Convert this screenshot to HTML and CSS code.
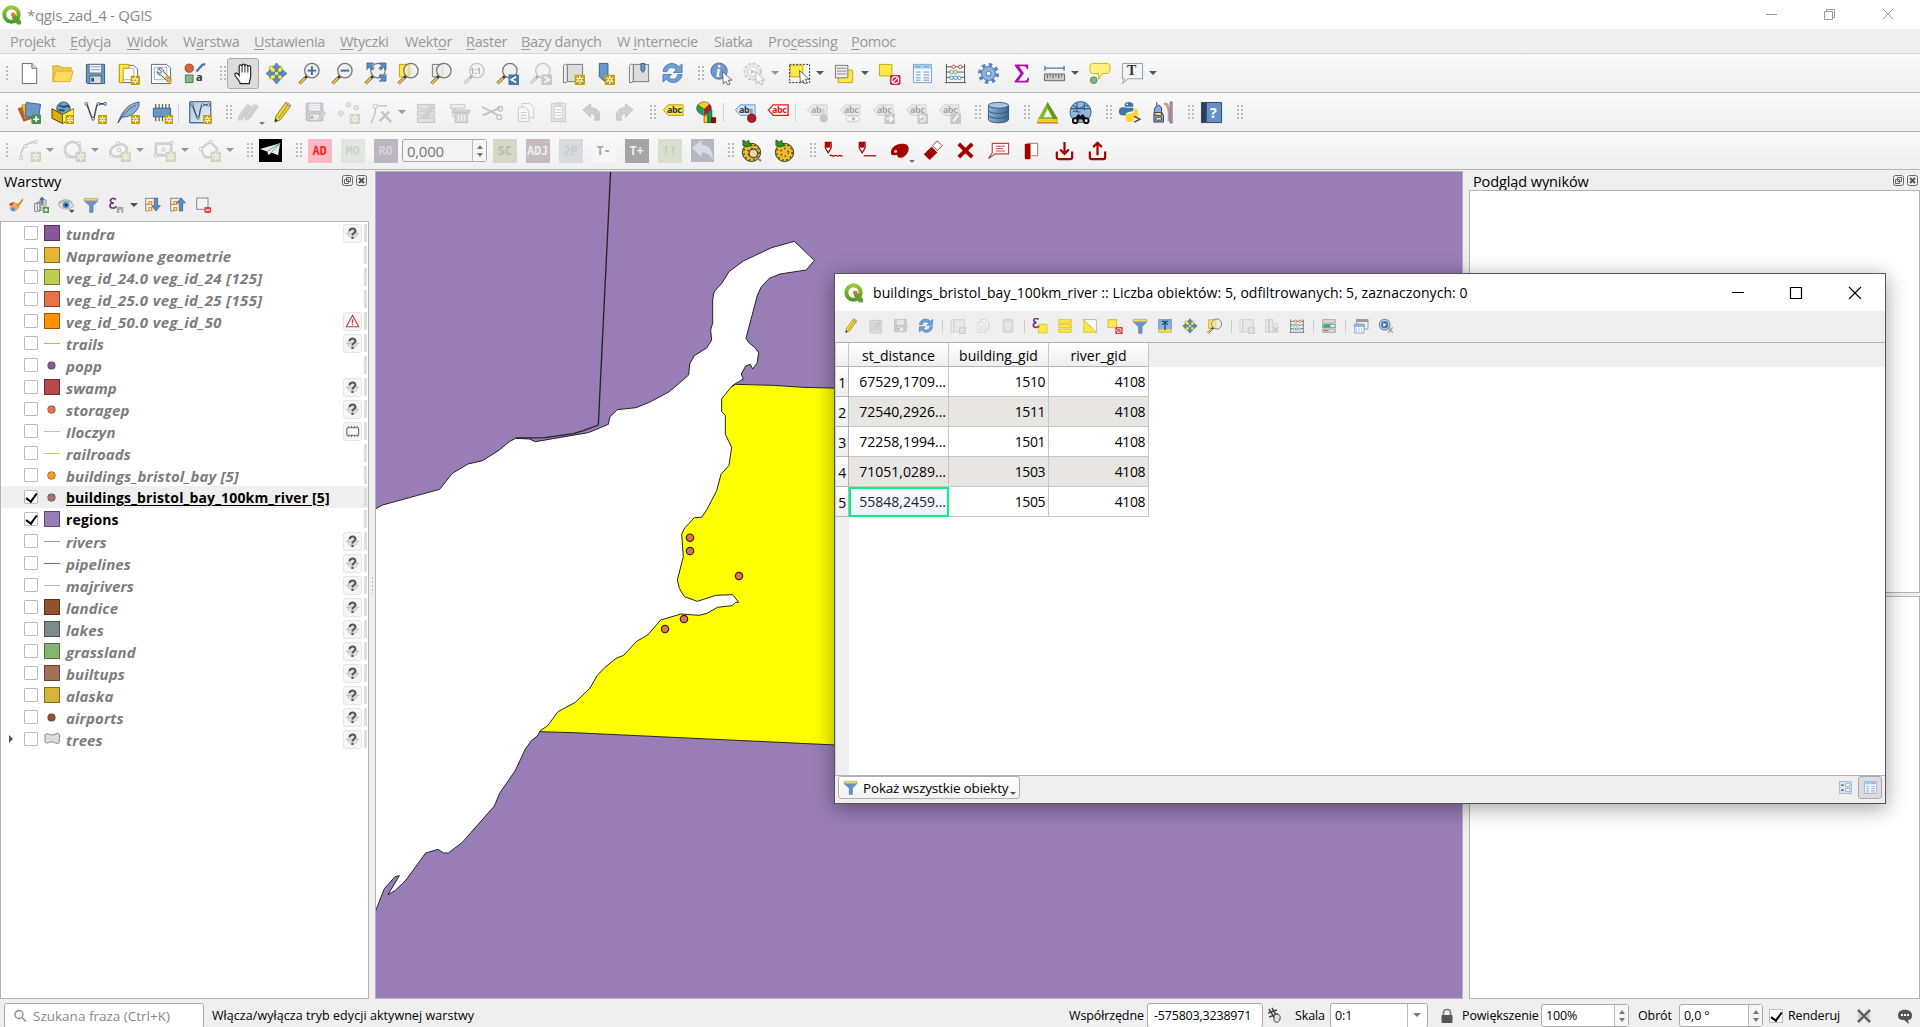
FILE: index.html
```html
<!DOCTYPE html>
<html lang="pl">
<head>
<meta charset="utf-8">
<title>*qgis_zad_4 - QGIS</title>
<link rel="stylesheet" href="styles.css">
</head>
<body>
<svg class="defs" width="0" height="0">
<defs>
<linearGradient id="gq" x1="0" y1="0" x2="0" y2="1"><stop offset="0" stop-color="#9cc53b"/><stop offset="1" stop-color="#4f9a2c"/></linearGradient>
<linearGradient id="gb" x1="0" y1="0" x2="1" y2="1"><stop offset="0" stop-color="#a9c3e0"/><stop offset="1" stop-color="#f0f4fa"/></linearGradient>
<linearGradient id="gd" x1="0" y1="0" x2="1" y2="0"><stop offset="0" stop-color="#8fb3d9"/><stop offset="1" stop-color="#3e6690"/></linearGradient>
</defs>
<symbol id="star" viewBox="0 0 10 10"><rect width="10" height="10" rx="1" fill="#c4a000"/><path d="M5 1.2v7.6M1.700 3.100l6.600 3.800M8.300 3.100L1.700 6.900" stroke="#fff" stroke-width="1.300"/><circle cx="5" cy="5" r="1" fill="#c4a000"/></symbol>
<symbol id="qgis" viewBox="0 0 20 20"><circle cx="9.500" cy="9.500" r="7.200" fill="none" stroke="url(#gq)" stroke-width="4"/><path d="M10 9.500l3-.3 6 6.800v3.500h-3.800L10 13z" fill="#5ba02e"/><path d="M9.500 7.500l4 .6-1 4-3.500-1z" fill="#ee7913"/></symbol>
<symbol id="new" viewBox="0 0 24 24"><path d="M4.500 1.500h10l5 5v16h-15z" fill="#fff" stroke="#666"/><path d="M14.500 1.500v5h5" fill="#ddd" stroke="#666"/></symbol>
<symbol id="open" viewBox="0 0 24 24"><path d="M2 20V4h7l2 2h10v4" fill="#f2c94c" stroke="#d6a520"/><path d="M2 20.500L5 9.500h18l-3 11z" fill="#ffdc5e" stroke="#dcae2c"/></symbol>
<symbol id="save" viewBox="0 0 24 24"><path d="M2.500 2.500h19v20h-18l-1-1z" fill="#6d97c4" stroke="#3d5a7c"/><path d="M5.500 2.500h13v9h-13z" fill="#f4f4f4" stroke="#56779b"/><path d="M7 5h10M7 8h10" stroke="#999"/><path d="M6 14.500h12v8H6z" fill="#ddd" stroke="#3d5a7c"/><path d="M7.500 16.500h3v4h-3z" fill="#3d5a7c"/></symbol>
<symbol id="layout" viewBox="0 0 24 24"><path d="M2.500 3.500h15l4 4v14h-19z" fill="#fff" stroke="#666"/><path d="M5.500 6.500h12v12h-12z" fill="#fff" stroke="#9ab0dd"/><path d="M2.500 2.500h10v4h-6v15h-4z" fill="#fce94f" stroke="#c4a000"/><use href="#star" x="14" y="14" width="10" height="10"/></symbol>
<symbol id="wrench" viewBox="0 0 24 24"><path d="M1.500 2.500h16l4 4v16h-20z" fill="#fff" stroke="#666"/><path d="M4.500 5.500h13v13h-13z" fill="#f5f8ff" stroke="#9ab0dd"/><path d="M8 7c3-1.500 6 0 6.500 3.500L22 18l-3 3-7.500-7.500C9 14 7.500 12.500 7.500 10l3 2 2-2z" fill="#eee" stroke="#555"/><path d="M16.500 15l5.500 6" stroke="#d9b33a" stroke-width="3.500"/></symbol>
<symbol id="style" viewBox="0 0 24 24"><circle cx="6.500" cy="6.500" r="4.300" fill="#d6613c" stroke="#a5452a"/><path d="M14 10l7-8M21 2l2 1" stroke="#4878ae" stroke-width="2.500"/><path d="M2.500 13.500h8v8h-8z" fill="#8cb68a" stroke="#4e7d4c"/></symbol>
<symbol id="hand" viewBox="0 0 24 24"><path d="M8.500 22.500c0-3-5.500-7-5.500-9.500s3-1.500 4.500 1V4.500c0-2 3-2 3 0 0-3 3-3 3 .2 0-2.500 3-2.500 3 .5 0-2 3-2 3 .5v9c0 3-1.500 5-1.500 7.800z" fill="#fff" stroke="#222" stroke-width="1.200"/><path d="M10.500 4v7M13.500 4.500V11M16.500 5v6" stroke="#222"/></symbol>
<symbol id="arrows" viewBox="0 0 24 24"><path d="M12 1l4 5h-2.500v4h-3V6H8zM12 23l-4-5h2.500v-4h3v4H16zM1 12l5-4v2.500h4v3H6V16zM23 12l-5 4v-2.500h-4v-3h4V8z" fill="#5e8cc2" stroke="#3d6a9c" stroke-width=".7"/></symbol>
<symbol id="pansel" viewBox="0 0 24 24"><path d="M4.500 4.500h13v13h-13z" fill="#ffee58" stroke="#d0b400"/><use href="#arrows"/></symbol>
<symbol id="glass" viewBox="0 0 24 24"><path d="M1.500 22.500l8-8" stroke="#333" stroke-width="3"/><path d="M1.500 22.500l6-6" stroke="#fcc83a" stroke-width="2"/><circle cx="14.500" cy="9" r="7.500" fill="#eee" fill-opacity=".8" stroke="#777" stroke-width="1.300"/></symbol>
<symbol id="zin" viewBox="0 0 24 24"><use href="#glass"/><path d="M14.500 4.500v9M10 9h9" stroke="#3e6da3" stroke-width="2"/></symbol>
<symbol id="zout" viewBox="0 0 24 24"><use href="#glass"/><path d="M10 9h9" stroke="#3e6da3" stroke-width="2"/></symbol>
<symbol id="zfull" viewBox="0 0 24 24"><use href="#glass"/><path d="M3 1h7L7.500 3.500l3 3-2 2-3-3L3 8zM23 1h-7l2.500 2.500-3 3 2 2 3-3L23 8zM23 20h-7l2.500-2.500-3-3 2-2 3 3L23 13z" fill="#5e8cc2" stroke="#335a86" stroke-width=".7"/></symbol>
<symbol id="zsel" viewBox="0 0 24 24"><path d="M2.500 2.500h11v13h-11z" fill="#fce94f" stroke="#c4a000"/><use href="#glass"/><path d="M14 3h-3v12h3z" fill="#eddd82"/></symbol>
<symbol id="zlay" viewBox="0 0 24 24"><path d="M2.500 2.500h11v13h-11z" fill="#e8e8e8" stroke="#777"/><use href="#glass"/></symbol>
<symbol id="zprev" viewBox="0 0 24 24"><use href="#glass"/><path d="M13 13h11v11H13z" fill="#4878ae"/><path d="M21 15.500l-5 3 5 3" fill="none" stroke="#fff" stroke-width="1.800"/></symbol>
<symbol id="znext" viewBox="0 0 24 24"><use href="#glass"/><path d="M13 13h11v11H13z" fill="#888"/><path d="M16 15.500l5 3-5 3" fill="none" stroke="#fff" stroke-width="1.800"/></symbol>
<symbol id="map" viewBox="0 0 24 24"><path d="M5.500 2.500h16v18h-16z" fill="#ddd" stroke="#777"/><path d="M1.500 4.500c0-3 4-3 4 0v15l-1 2h-3z" fill="#eee" stroke="#777"/></symbol>
<symbol id="newmap" viewBox="0 0 24 24"><use href="#map"/><use href="#star" x="13" y="13" width="11" height="11"/></symbol>
<symbol id="newbm" viewBox="0 0 24 24"><path d="M4.500 1.500h9v16l-3 3-6-5z" fill="#6b97c8" stroke="#3d5f87"/><use href="#star" x="10" y="13" width="11" height="11"/></symbol>
<symbol id="bm" viewBox="0 0 24 24"><use href="#map"/><path d="M13.500 1.500h4v7l-2 2.500-2-2.500z" fill="#6b97c8" stroke="#3d5f87"/></symbol>
<symbol id="refresh" viewBox="0 0 24 24"><path d="M2 10C3 1 14-1 18.500 5L22 2v9h-9l3-3C12 4 7 6 6.500 10zM22 13c-1 9-12 11-16.500 5L2 21v-8h9l-3 3c4 4 9 1.500 9.500-3z" fill="#6ea0d8" stroke="#3f74ad" stroke-width=".8"/></symbol>
<symbol id="cur" viewBox="0 0 24 24"><path d="M13 10l10 9h-4l2 4-2.500 1-2-4-2.500 3z" fill="#fff" stroke="#555" stroke-width=".9"/></symbol>
<symbol id="info" viewBox="0 0 24 24"><circle cx="9.500" cy="9.500" r="8.500" fill="#6e99cc" stroke="#4a75a8"/><use href="#cur"/></symbol>
<symbol id="cog" viewBox="0 0 24 24"><circle cx="12" cy="12" r="9" fill="none" stroke="#5a86bd" stroke-width="4" stroke-dasharray="3.500 3.570"/><circle cx="12" cy="12" r="7.300" fill="#8db3de" stroke="#4a75a8"/><circle cx="12" cy="12" r="2.500" fill="#f5f8fc" stroke="#4a75a8"/></symbol>
<symbol id="action" viewBox="0 0 24 24"><circle cx="10" cy="10" r="8.500" fill="#ddd" stroke="#888" stroke-width="2" stroke-dasharray="3 2"/><circle cx="10" cy="10" r="5" fill="#fff" stroke="#888"/><path d="M8 7l5 3-5 3z" fill="#888"/><use href="#cur"/></symbol>
<symbol id="select" viewBox="0 0 24 24"><path d="M1.500 2.500h21v19h-21z" fill="none" stroke="#222" stroke-dasharray="2 1.500"/><path d="M2.500 3.500h13v12h-13z" fill="#fde94a" stroke="#c9a800"/><use href="#cur" x="-1" y="-1"/></symbol>
<symbol id="form" viewBox="0 0 24 24"><path d="M5.500 8.500h15v13h-15z" fill="#fde94a" stroke="#c9a800"/><path d="M2.500 3.500h13v13h-13z" fill="#eee" stroke="#777"/><path d="M4 6.500h10M4 9.500h10M4 12.500h10" stroke="#888"/></symbol>
<symbol id="desel" viewBox="0 0 24 24"><path d="M1.500 2.500h13v12h-13z" fill="#fde94a" stroke="#c9a800"/><rect x="12.500" y="13.500" width="11" height="10.500" rx="1.500" fill="#dd2a3a"/><circle cx="18" cy="18.700" r="3.500" fill="none" stroke="#fff" stroke-width="1.200"/><path d="M15.500 21l5-4.500" stroke="#fff" stroke-width="1.200"/></symbol>
<symbol id="table" viewBox="0 0 24 24"><path d="M2.500 2.500h19v19h-19z" fill="#f3f8ff" stroke="#7a9cc5"/><path d="M3 3h18v4H3z" fill="#a9d2ee"/><path d="M5 5h5M13 5h6M5 10.500h5M5 13.500h5M5 16.500h5M5 19h5M13 10.500h6M13 13.500h6M13 16.500h6M13 19h6" stroke="#6e93c4"/></symbol>
<symbol id="abacus" viewBox="0 0 24 24"><path d="M2.500 2v20M21.500 2v20M2 5h20M2 10.500h20M2 16h20M1 21.500h22" stroke="#555"/><g stroke-width="1" fill="#fff"><g stroke="#d04040"><circle cx="10" cy="5" r="1.800"/><circle cx="17" cy="5" r="1.800"/></g><g stroke="#58ab58"><circle cx="8" cy="10.500" r="1.800"/><circle cx="12" cy="10.500" r="1.800"/></g><g stroke="#4888c0"><circle cx="8" cy="16.500" r="1.800"/><circle cx="12" cy="16.500" r="1.800"/><circle cx="16" cy="16.500" r="1.800"/></g></g></symbol>
<symbol id="sigma" viewBox="0 0 24 24"><path d="M5 2.500h14v5h-1.500c-.5-2-1-3-3-3H9.500l5 7.200-5.500 7.800h6c2 0 3-1 3.500-3H20l-.8 5H4.800v-1.300l6-8.200L5 4z" fill="#a818a8"/></symbol>
<symbol id="ruler" viewBox="0 0 24 24"><path d="M2 6.500h20M2 4v5M22 4v5" stroke="#4b77aa" stroke-width="1.300"/><path d="M1.500 12.500h21v7h-21z" fill="#ccc" stroke="#666"/><path d="M4.500 13v4M7.500 13v2.500M10.500 13v4M13.500 13v2.500M16.500 13v4M19.500 13v2.500" stroke="#555"/></symbol>
<symbol id="tip" viewBox="0 0 24 24"><path d="M5 1.500h15c3 0 3 3 3 5.500s-1 5-3 5h-5l-4 6v-6H5c-3 0-3-2.500-3-5s0-5.500 3-5.500z" fill="#fff283" stroke="#cdb21c"/><circle cx="6" cy="19" r="3.500" fill="#82b385" stroke="#5d8e60"/></symbol>
<symbol id="textn" viewBox="0 0 24 24"><path d="M1.500 1.500h21v16h-15l-6 5 2-5h-2z" fill="#f0f5f8" stroke="#999"/></symbol>
<symbol id="dsm" viewBox="0 0 24 24"><path d="M0 8l6 13 9-3-6-13z" fill="#c85a2c" stroke="#8f3c18" stroke-width=".6"/><path d="M4 4l3 14 11-3-3-12z" fill="#f0c020" stroke="#a88000" stroke-width=".6"/><path d="M8.500 1.500l15 2-2 14.500-14-2z" fill="#6d97c9" stroke="#3d6594"/><rect x="14" y="14" width="10" height="10" rx="1" fill="#4e8b57"/><path d="M19 16v6M16 19h6" stroke="#fff" stroke-width="1.700"/></symbol>
<symbol id="gpkg" viewBox="0 0 24 24"><circle cx="13" cy="8" r="7" fill="#7b9ec8" stroke="#2e5580"/><path d="M8 5c3-1 3 2 6 1s4-2 5 1M8 10c3-2 4 2 6-1" stroke="#284b72" stroke-width="2" fill="none"/><path d="M1 8l11 6v9.500L1 18z" fill="#d9b100" stroke="#504000"/><path d="M12 14l12-6v9l-12 6.500z" fill="#fff04a" stroke="#6e6000"/><use href="#star" x="15" y="14.500" width="9.500" height="9.500"/></symbol>
<symbol id="vnode" viewBox="0 0 24 24"><path d="M2.500 3c2 2 4 13 7 16C12 17 12 3 15 3h6" fill="none" stroke="#3d5166" stroke-width="1.600"/><g fill="#fff" stroke="#3d5166"><circle cx="2.500" cy="3" r="1.500"/><circle cx="9.500" cy="18.500" r="1.500"/><circle cx="15" cy="3" r="1.500"/><circle cx="22" cy="3" r="1.500"/></g></symbol>
<symbol id="shp" viewBox="0 0 24 24"><use href="#vnode"/><use href="#star" x="14.500" y="14.500" width="9.500" height="9.500"/></symbol>
<symbol id="feather" viewBox="0 0 24 24"><path d="M1 23C5 11 11 3 23 1c1 6-4 12-11 15l-7 1z" fill="#8fb0d5" stroke="#3f6288"/><path d="M1 23C5 15 12 8 20 4" stroke="#3f6288" fill="none"/><use href="#star" x="14.500" y="14.500" width="9.500" height="9.500"/></symbol>
<symbol id="chip" viewBox="0 0 24 24"><path d="M6 3v18M9.500 3v18M13 3v18M16.500 3v18M20 3v18" stroke="#555" stroke-width="1.200"/><path d="M3.500 7.500h18v9h-18z" fill="#6995c8" stroke="#39608d"/><use href="#star" x="15" y="14.500" width="9.500" height="9.500"/></symbol>
<symbol id="virt" viewBox="0 0 24 24"><rect x=".7" y=".7" width="22" height="22" rx="1" fill="url(#gb)" stroke="#4a75a8" stroke-width="1.400"/><use href="#vnode" x="1" y="1" width="21" height="22"/><use href="#star" x="14.500" y="14.500" width="9.500" height="9.500"/></symbol>
<symbol id="pencil" viewBox="0 0 24 24"><path d="M4 22l1-6L15 2l5 3.500-10 14z" fill="#f0d83c" stroke="#8a7a20"/><path d="M15 2l1-1 5 3.500-1 1z" fill="#ddd" stroke="#777" stroke-width=".7"/><path d="M17.500 4L8 18" stroke="#bfa52a" stroke-width="1.500"/><path d="M4 22l.6-3.500L7 20z" fill="#222"/></symbol>
<symbol id="pencilg" viewBox="0 0 24 24"><path d="M4 22l1-6L15 2l5 3.500-10 14z" fill="#b9a49c" stroke="#776"/><path d="M15 2l1-1 5 3.500-1 1z" fill="#ddd" stroke="#777" stroke-width=".7"/><path d="M17.500 4L8 18" stroke="#8a7a76" stroke-width="1.500"/></symbol>
<symbol id="pencils" viewBox="0 0 24 24"><use href="#pencilg" x="-3" y="1" width="20" height="22"/><use href="#pencilg" x="4" y="1" width="20" height="22"/></symbol>
<symbol id="saveed" viewBox="0 0 24 24"><use href="#save" width="22" height="22"/><use href="#pencilg" x="12" y="9" width="13" height="14"/></symbol>
<symbol id="pts" viewBox="0 0 24 24"><g fill="#ccc" stroke="#888"><circle cx="4" cy="13" r="2.500"/><circle cx="12" cy="4" r="2.500"/><circle cx="20" cy="7" r="2.500"/></g><use href="#star" x="13" y="13" width="11" height="11"/></symbol>
<symbol id="vtool" viewBox="0 0 24 24"><path d="M1 23c3-5 5-10 5-18h12" fill="none" stroke="#777" stroke-width="1.500"/><path d="M3.500 3.500h4v4h-4z" fill="#fff" stroke="#777"/><path d="M10 21l10-10M12 11l10 11" stroke="#777" stroke-width="2.500"/></symbol>
<symbol id="multi" viewBox="0 0 24 24"><path d="M2.500 3.500h18v5h-18zM2.500 10.500h18v5h-18zM2.500 17.500h18v5h-18z" fill="#c9c49a" stroke="#776f50"/><use href="#pencilg" x="6" y="1" width="17" height="20"/></symbol>
<symbol id="trash" viewBox="0 0 24 24"><path d="M2.500 3.500h15v4h-15zM4.500 7.500v9h3v-9" fill="#e8dada" stroke="#977"/><path d="M5.500 9.500h17v3h-17zM7.500 12.500h13v10h-13z" fill="#c99" stroke="#966"/><path d="M11 14v7M14 14v7M17 14v7" stroke="#fff"/></symbol>
<symbol id="cut" viewBox="0 0 24 24"><path d="M1 6l17 9M2 15l18-8" stroke="#777" stroke-width="2"/><circle cx="20" cy="8" r="2.500" fill="none" stroke="#777" stroke-width="1.500"/><circle cx="19" cy="17" r="2.500" fill="none" stroke="#777" stroke-width="1.500"/></symbol>
<symbol id="copy" viewBox="0 0 24 24"><path d="M8.500 2.500h8l4 4v11h-12z" fill="#f8f8f8" stroke="#888"/><path d="M4.500 6.500h7l4 4v11h-11z" fill="#fff" stroke="#888"/><path d="M7 12h6M7 15h6M7 18h6" stroke="#888"/></symbol>
<symbol id="paste" viewBox="0 0 24 24"><path d="M4.500 2.500h15v19h-15z" fill="#ccc" stroke="#888"/><path d="M7.500 5.500h9v13h-9z" fill="#fff" stroke="#888"/><path d="M9 1h6v4H9z" fill="#aaa"/><path d="M9 9h6M9 12h6M9 15h6" stroke="#888"/></symbol>
<symbol id="undo" viewBox="0 0 24 24"><path d="M3 9l8-6v4c8 0 11 5 9 13h-5c2-4 0-7-4-7v4z" fill="#a88a70" stroke="#8b6f5a"/></symbol>
<symbol id="redo" viewBox="0 0 24 24"><path d="M21 9l-8-6v4C5 7 2 12 4 20h5c-2-4 0-7 4-7v4z" fill="#8f9a8f" stroke="#6d7a6d"/></symbol>
<symbol id="lab" viewBox="0 0 24 24"><path d="M1.500 9.500l5-5.500h15.500v11H6.500z" fill="#fbe850" stroke="#b89b00"/></symbol>
<symbol id="labr" viewBox="0 0 24 24"><path d="M1.500 9.500l5-5.500h15.500v11H6.500z" fill="#fff" stroke="#e11" stroke-width="1.400"/></symbol>
<symbol id="labg" viewBox="0 0 24 24"><path d="M1.500 9.500l5-5.500h15.500v11H6.500z" fill="#ddd9b8" stroke="#999"/></symbol>
<symbol id="labpin" viewBox="0 0 24 24"><path d="M1.500 9.500l5-5.500h15.500v11H6.500z" fill="#cfe4fb" stroke="#5a96dc"/><path d="M18 8v8" stroke="#999" stroke-width="3"/><circle cx="18.500" cy="18" r="4.300" fill="#b01a22" stroke="#7c1016"/></symbol>
<symbol id="labpg" viewBox="0 0 24 24"><use href="#labg"/><path d="M18 8v8" stroke="#999" stroke-width="3"/><circle cx="18.500" cy="18" r="4.300" fill="#a77"/></symbol>
<symbol id="labeye" viewBox="0 0 24 24"><use href="#labg"/><path d="M7 19c4-5 11-5 15 0-4 4-11 4-15 0z" fill="#fff" stroke="#777"/><circle cx="15" cy="18.500" r="2" fill="#777"/></symbol>
<symbol id="labmv" viewBox="0 0 24 24"><use href="#labg"/><path d="M13 13h11v11H13z" fill="#888"/><path d="M15 18.500h6M18.500 15.500l3 3-3 3" stroke="#fff" stroke-width="1.800" fill="none"/></symbol>
<symbol id="labrot" viewBox="0 0 24 24"><use href="#labg"/><path d="M13 13h11v11H13z" fill="#888"/><path d="M16 21c5 2 7-5 2-5.500l-2 2v-3" stroke="#fff" stroke-width="1.500" fill="none"/></symbol>
<symbol id="labed" viewBox="0 0 24 24"><use href="#labg"/><path d="M13 13h11v11H13z" fill="#888"/><path d="M16 21l5-6" stroke="#fff" stroke-width="2"/></symbol>
<symbol id="diag" viewBox="0 0 24 24"><path d="M9.500 8.500L3 4a8 8 0 0 1 11-1.500z" fill="#f7d21a"/><path d="M9 8L3 4c-3 4-1 8 6 11z" fill="#13a84b"/><path d="M9.500 8.500L15 3c4 4 2 9-5.500 12z" fill="#c3151c"/><path d="M3 4c3-4 9-4 12-1 4 4 2 10-5 12-7-1-10-6-7-11zM3 4l6.500 4.500L15 3M9.500 8.500v6" fill="none" stroke="#333" stroke-width=".6"/><path d="M9.500 15.500h4v7h-4z" fill="#ffd21a" stroke="#a07000"/><path d="M13.500 9.500h4v13h-4z" fill="#10a050" stroke="#064"/><path d="M17.500 17.500h4v5h-4z" fill="#b00" stroke="#600"/></symbol>
<symbol id="db" viewBox="0 0 24 24"><path d="M1.500 5v14c0 5 21 5 21 0V5z" fill="url(#gd)" stroke="#365678"/><ellipse cx="12" cy="4.500" rx="10.500" ry="3" fill="#a9c6e4" stroke="#365678"/><path d="M1.500 10c2 4 19 4 21 0M1.500 15c2 4 19 4 21 0" fill="none" stroke="#365678"/></symbol>
<symbol id="tri" viewBox="0 0 24 24"><path d="M12 1L2 19h21zM12 8l5 9H8z" fill="#86b82a" fill-rule="evenodd"/><path d="M12 1l11 18h-5L11 5z" fill="#5c9c20"/><path d="M1 20h22" stroke="#f6c500" stroke-width="1.500"/><path d="M1 22.500h22" stroke="#f07a1a" stroke-width="2"/></symbol>
<symbol id="osm" viewBox="0 0 24 24"><circle cx="12" cy="11.500" r="11" fill="#93b5da" stroke="#33618f"/><path d="M4 5c4 1 5 4 9 2s5-4 7-1M4 11c4-2 6 2 8 0M8 1c0 5 2 7 0 10M16 1v9M2 8h20" fill="none" stroke="#33618f" stroke-width="1.200"/><path d="M5 20l4-6h2l1 2 1-2h2l4 6-3 2-3-3h-2l-3 3z" fill="#111"/><g fill="#fff" stroke="#111" stroke-width="2"><circle cx="6.500" cy="20.500" r="2.500"/><circle cx="18" cy="20.500" r="2.500"/></g></symbol>
<symbol id="py" viewBox="0 0 24 24"><path d="M8 6h8V4c0-4-9-4-9-.5V6zM11 7h5v3c0 2-8 0-8 5-5 1-7-1-7-4 0-5 3-5 10-4z" fill="#3f74a5"/><path d="M13 22c-5 0-5-2-5-5s1-4 4-4c4 0 5-1 5-5 4-1 4 3 4 6s-1 4-8 4h3c2 3 0 4-3 4z" fill="#ffd43b"/><circle cx="9.500" cy="3.500" r="1" fill="#fff"/><path d="M17 16l6 3-6 3" fill="none" stroke="#444" stroke-width="1.500"/></symbol>
<symbol id="robot" viewBox="0 0 24 24"><path d="M6 1v4M4 7l4-3 3 3v4l2 4v7H3v-8z" fill="#93a5e8" stroke="#345"/><path d="M4 12h7v3H4zM5 17h6v3H5z" fill="#f3e58b" stroke="#444"/><path d="M14 4c3-4 5 6 5 10v7" stroke="#c99" stroke-width="3" fill="none"/><path d="M20 1h2v22h-2z" fill="#bcc4dd" stroke="#667"/></symbol>
<symbol id="help" viewBox="0 0 24 24"><path d="M1.500 1.500h21v21h-21z" fill="#6390c8" stroke="#2d4563"/><path d="M2 2h5v20H2z" fill="#2c3e55"/></symbol>
<symbol id="arc" viewBox="0 0 24 24"><path d="M3 20C3 9 8 4 18 3" fill="none" stroke="#888" stroke-width="1.700"/><path d="M1.500 18.500h3v3h-3zM6 6h3v3H6zM17 1.500h3v3h-3z" fill="#fff" stroke="#888"/><use href="#star" x="13" y="13" width="11" height="11"/></symbol>
<symbol id="circ" viewBox="0 0 24 24"><circle cx="10" cy="11" r="8" fill="none" stroke="#999" stroke-width="3"/><path d="M15 3h3v3h-3zM3 16h3v3H3z" fill="#fff" stroke="#888"/><use href="#star" x="13" y="13" width="11" height="11"/></symbol>
<symbol id="ell" viewBox="0 0 24 24"><ellipse cx="11" cy="12" rx="9" ry="6" transform="rotate(-20 11 12)" fill="none" stroke="#999" stroke-width="3"/><path d="M10 10h3v3h-3zM9 3h3v3H9zM2 16h3v3H2z" fill="#fff" stroke="#888"/><use href="#star" x="13" y="13" width="11" height="11"/></symbol>
<symbol id="rect" viewBox="0 0 24 24"><path d="M3 5h16v12H3z" fill="none" stroke="#999" stroke-width="3"/><path d="M18 2.500h3v3h-3zM9.500 9.500h3v3h-3zM1.500 16h3v3h-3z" fill="#fff" stroke="#888"/><use href="#star" x="13" y="13" width="11" height="11"/></symbol>
<symbol id="poly" viewBox="0 0 24 24"><path d="M3 10l10-7 7 7-3 9H7z" fill="none" stroke="#999" stroke-width="2.500"/><path d="M12 1.500h3v3h-3zM1.500 9h3v3h-3z" fill="#fff" stroke="#888"/><use href="#star" x="13" y="13" width="11" height="11"/></symbol>
<symbol id="plane" viewBox="0 0 24 24"><path d="M0 0h24v24H0z" fill="#000"/><path d="M1 10.500L22 4.500 20 17l-7-3-3 3-1.500-4z" fill="#e3eef0"/><path d="M8.500 13L22 4.500 13 14" fill="none" stroke="#7d9a9e"/></symbol>
<symbol id="back" viewBox="0 0 24 24"><path d="M0 0h24v24H0z" fill="#b5b7c3"/><path d="M1 9l10-8v5c8 0 12 6 12 16-3-6-6-8-12-8v5z" fill="#d6dbe4"/></symbol>
<symbol id="pine" viewBox="0 0 24 24"><circle cx="12" cy="14" r="9.500" fill="#edb92d" stroke="#263b1a"/><circle cx="12" cy="14" r="8" fill="none" stroke="#3c3c1d" stroke-width="1.500" stroke-dasharray="1.500 3"/><circle cx="12" cy="14" r="4" fill="none" stroke="#3c3c1d" stroke-width="1.500" stroke-dasharray="1.500 3"/><path d="M3 1l4 2 2-2 1 4 3 2-6 1-4-1z" fill="#2f9125" stroke="#154c10" stroke-width=".7"/></symbol>
<symbol id="pineg" viewBox="0 0 24 24"><use href="#pine"/><circle cx="14" cy="15" r="4.500" fill="#e8dd97" stroke="#555" stroke-width="1.500"/><path d="M17 19l5 4" stroke="#888" stroke-width="2"/></symbol>
<symbol id="pen" viewBox="0 0 24 24"><path d="M3.500 3.500h6v6l-3 5-3-5z" fill="#fff" stroke="#a00" stroke-width="1.300"/><path d="M4 4h5v5H4z" fill="#a00"/></symbol>
<symbol id="penw" viewBox="0 0 24 24"><use href="#pen"/><path d="M8 17.500c2-2 3 1.500 5 0s3 1.500 4.500 0 2 .5 4 .5" fill="none" stroke="#a00" stroke-width="1.300"/></symbol>
<symbol id="penl" viewBox="0 0 24 24"><use href="#pen" x="1"/><path d="M9 17.500h13" stroke="#a00" stroke-width="1.300"/></symbol>
<symbol id="blob" viewBox="0 0 24 24"><path d="M3 14c0-6 7-10 13-9 6 0 7 6 4 10-4 6-11 5-10 3 0-2-1-1-4-1-2 0-3-1-3-3z" fill="#a50000"/><circle cx="8" cy="13" r="1.500" fill="#f3d0d0"/></symbol>
<symbol id="eraser" viewBox="0 0 24 24"><path d="M3 16l8-8 6 6-8 8z" fill="#a50000"/><path d="M12 7l5-5 5 5-5 5z" fill="#fff" stroke="#a33"/></symbol>
<symbol id="cross" viewBox="0 0 24 24"><path d="M5 5l14 14M19 5L5 19" stroke="#a50000" stroke-width="4"/></symbol>
<symbol id="note" viewBox="0 0 24 24"><path d="M5.500 4.500h17v11h-14l-7 5 4-6z" fill="#fff" stroke="#b44" stroke-width="1.200"/><path d="M9 7.500h10M9 10h8M9 12.500h10" stroke="#b44"/></symbol>
<symbol id="card" viewBox="0 0 24 24"><path d="M8 4.500h10.500v13H12" fill="#fff" stroke="#b66"/><rect x="5" y="5" width="6" height="16" rx="1" fill="#a50000"/></symbol>
<symbol id="down" viewBox="0 0 24 24"><path d="M4 13v6c0 1 1 2 2 2h12c1 0 2-1 2-2v-6M12 3v12M7.500 11l4.500 4.500 4.500-4.500" fill="none" stroke="#a50000" stroke-width="2.300"/></symbol>
<symbol id="up" viewBox="0 0 24 24"><path d="M4 13v6c0 1 1 2 2 2h12c1 0 2-1 2-2v-6M12 17V4M7.500 8.500L12 4l4.500 4.500" fill="none" stroke="#a50000" stroke-width="2.300"/></symbol>
<symbol id="brush" viewBox="0 0 24 24"><path d="M2 10l8-3 7 8-6 7-8-4z" fill="#eda868"/><path d="M1 11l5 2 3-6z" fill="#d33"/><path d="M3 19l5-4 3 3-3 4z" fill="#5b8ed0"/><path d="M11 9l4 1 7-8 1 3-6 8-2 3z" fill="#c9963a"/></symbol>
<symbol id="grp" viewBox="0 0 24 24"><path d="M2.500 9.500h8v12h-8zM6.500 7.500h10v12h-10zM10.500 4.500h9v12h-9z" fill="#f6f6f6" stroke="#777" stroke-width="1.300"/><path d="M13.500 13V1M10.500 4l3-3 3 3" fill="none" stroke="#3e6690" stroke-width="2"/><path d="M15 15h9v9h-9z" fill="#4e9b57"/><path d="M19.500 16.500v6M16.500 19.500h6" stroke="#fff" stroke-width="1.500"/></symbol>
<symbol id="eye" viewBox="0 0 24 24"><path d="M0 12c5-8 19-8 24 1-6 7-18 7-24-1z" fill="#ddd" stroke="#999"/><path d="M1 9c5-6 15-6 20-1" fill="none" stroke="#aaa" stroke-width="2"/><circle cx="12" cy="12" r="5" fill="#4f88c6"/><circle cx="12" cy="12" r="2" fill="#123"/><path d="M16 19h9l-4.500 5z" fill="#555"/></symbol>
<symbol id="funnel" viewBox="0 0 24 24"><path d="M2 3h20v3l-7 7v10h-5V13L2 6z" fill="#6993c4" stroke="#55799f"/><path d="M2 2h20v3.500H2z" fill="#f6df40" stroke="#aaa"/></symbol>
<symbol id="eps" viewBox="0 0 24 24"><path d="M12 4C8 0 2 3 4 7c1 2 3 2 5 2-4 0-6 1-6 4 0 4 7 5 10 1" fill="none" stroke="#6e3a7d" stroke-width="2.500"/><path d="M13 15h10v9h-3v-5h-3v5h-4z" fill="#aaa"/></symbol>
<symbol id="exp" viewBox="0 0 24 24"><path d="M0 2h20M1 2v19h5M1 11h5" fill="none" stroke="#888" stroke-width="1.500"/><path d="M6 7h4v4H6zM6 16h4v4H6z" fill="#fff" stroke="#ef9a1a" stroke-width="2"/><path d="M14 2h5v11h4l-6.500 8-6.500-8h4z" fill="#5c8cc0" stroke="#335a86"/></symbol>
<symbol id="col" viewBox="0 0 24 24"><path d="M0 2h14M1 2v19h5M1 11h5" fill="none" stroke="#888" stroke-width="1.500"/><path d="M6 7h4v4H6zM6 16h4v4H6z" fill="#fff" stroke="#ef9a1a" stroke-width="2"/><path d="M14 21h5V9h4l-6.500-8L10 9h4z" fill="#5c8cc0" stroke="#335a86"/></symbol>
<symbol id="rem" viewBox="0 0 24 24"><path d="M2.500 1.500h17v17h-17z" fill="#f3f3f3" stroke="#777" stroke-width="1.300"/><rect x="14" y="15" width="10" height="9" rx="2" fill="#ee4040"/><path d="M16 19.500h6" stroke="#fff" stroke-width="2"/></symbol>
<symbol id="q" viewBox="0 0 18 18"><circle cx="9" cy="9" r="5" fill="#e2e2e2" stroke="#c4c4c4"/><path d="M2 9h14" stroke="#c4c4c4"/><path d="M6 6.500c0-4 6.500-3.500 6 0-.3 2-3 2-3 4.500M9 12.500v2.200" fill="none" stroke="#555" stroke-width="2.200"/></symbol>
<symbol id="warn" viewBox="0 0 18 18"><path d="M9 2.500l6.500 12h-13z" fill="#fff" stroke="#c43c3c" stroke-width="1.200"/><path d="M9 6.500v4M9 11.500v1.500" stroke="#c43c3c" stroke-width="1.500"/></symbol>
<symbol id="mem" viewBox="0 0 18 18"><path d="M5 3v12M8 3v12M11 3v12M14 3v12" stroke="#666"/><rect x="3" y="5" width="12.500" height="8" rx="1" fill="#fff" stroke="#666" stroke-width="1.200"/></symbol>
<symbol id="dock1" viewBox="0 0 11 11"><rect x=".5" y=".5" width="10" height="10" rx="2" fill="none" stroke="#666"/><path d="M4.500 2.500h4v4h-4zM2.500 4.500h4v4h-4z" fill="#efefef" stroke="#666"/></symbol>
<symbol id="dock2" viewBox="0 0 11 11"><rect x=".5" y=".5" width="10" height="10" rx="2" fill="none" stroke="#666"/><path d="M3 3l5 5M8 3L3 8" stroke="#555" stroke-width="2"/></symbol>
<symbol id="fsel" viewBox="0 0 24 24"><path d="M9.500 9.500h13v13h-13z" fill="#fde94a" stroke="#d9b700"/><path d="M10 2C6-1 2 1 3 5c1 1 2 2 4 2-3 0-5 1-5 4 0 4 6 4 9 1" fill="none" stroke="#6e3a7d" stroke-width="2.500"/></symbol>
<symbol id="all" viewBox="0 0 24 24"><path d="M2.500 2.500h19v5h-19zM2.500 9.500h19v5h-19zM2.500 16.500h19v5h-19z" fill="#fde94a" stroke="#d9b700"/></symbol>
<symbol id="inv" viewBox="0 0 24 24"><path d="M2.500 2.500h19v19z" fill="#fff" stroke="#999"/><path d="M2.500 2.500l19 19h-19z" fill="#fde94a" stroke="#d9b700"/></symbol>
<symbol id="top" viewBox="0 0 24 24"><path d="M2.500 2.500h19v19h-19z" fill="#8fb2d8" stroke="#4f7cae"/><path d="M2 17h20v5H2z" fill="#f5dc45"/><path d="M7 5h10M12 18V6M8 10l4-4 4 4" stroke="#234f7e" stroke-width="2" fill="none"/></symbol>
<symbol id="cols" viewBox="0 0 24 24"><path d="M2.500 2.500h5v19h-5zM7.500 2.500h6v19h-6z" fill="#ddd" stroke="#777"/><path d="M13 7.500h8v14h-8z" fill="#dfd7a0" stroke="#999"/><path d="M14 14l7 7M21 14l-7 7" stroke="#a77" stroke-width="2"/></symbol>
<symbol id="cond" viewBox="0 0 24 24"><path d="M2.500 2.500h19v5h-19zM2.500 16.500h19v5h-19z" fill="#ddd" stroke="#888"/><path d="M2.500 9.500h19v5h-19z" fill="#ddeee0" stroke="#2a8042"/><path d="M4 12h10" stroke="#3fae5c" stroke-width="4"/><path d="M4 19h7" stroke="#e33" stroke-width="1.500"/></symbol>
<symbol id="dockt" viewBox="0 0 24 24"><path d="M5.500 2.500h17v14h-17z" fill="#eee" stroke="#888"/><path d="M5 2h18v4H5z" fill="#999"/><path d="M2.500 9.500h14v13h-14z" fill="#fff" stroke="#5c8cc0"/><path d="M2 9h15v4H2zM5 15v6M9 15v6M13 15v6" fill="#8ebbe6" stroke="#7aa8d8"/></symbol>
<symbol id="act" viewBox="0 0 24 24"><circle cx="10" cy="10" r="8" fill="#cfdcec" stroke="#7f95ad" stroke-width="2"/><circle cx="10" cy="10" r="5.500" fill="#3f74b5"/><path d="M8 7l5 3-5 3z" fill="#fff"/><path d="M15 14l7 8M22 14l-7 8" stroke="#999" stroke-width="2"/></symbol>
<symbol id="fview" viewBox="0 0 24 24"><path d="M2.500 2.500h19v19h-19z" fill="#dbe7f5" stroke="#7a9cc5"/><path d="M5 8h4M5 16h4" stroke="#345" stroke-width="2"/><path d="M12 5.500h7v5h-7zM12 13.500h7v5h-7z" fill="#fff" stroke="#6e93c4"/></symbol>
</svg>

<div class="app">
<header class="title"><svg class="logo"><use href="#qgis"/></svg><span class="t-app">*qgis_zad_4 - QGIS</span>
<svg class="winbtn" viewBox="0 0 140 14"><path d="M2 6.500h11" stroke="#999"/><path d="M60.500 3.500h8v8h-8zM62.500 3v-1.500h8v8H69" fill="none" stroke="#999"/><path d="M119 1l10 10M129 1l-10 10" stroke="#999"/></svg></header>
<nav class="menu"><span style="width:60px">Pro<u>j</u>ekt</span><span style="width:57px"><u>E</u>dycja</span><span style="width:56px"><u>W</u>idok</span><span style="width:71px">W<u>a</u>rstwa</span><span style="width:86px"><u>U</u>stawienia</span><span style="width:65px"><u>W</u>tyczki</span><span style="width:61px">Wekt<u>o</u>r</span><span style="width:55px"><u>R</u>aster</span><span style="width:96px"><u>B</u>azy danych</span><span style="width:97px">W <u>i</u>nternecie</span><span style="width:54px">Siatka</span><span style="width:83px">Pro<u>c</u>essing</span><span><u>P</u>omoc</span></nav>

<div class="bar">
<i class="h first"></i><b><svg><use href="#new"/></svg></b><b><svg><use href="#open"/></svg></b><b><svg><use href="#save"/></svg></b><b><svg><use href="#layout"/></svg></b><b><svg><use href="#wrench"/></svg></b><b><svg><use href="#style"/></svg><span class="tx tx-a">a</span></b><i class="h"></i><b class="on"><svg><use href="#hand"/></svg></b><b><svg><use href="#pansel"/></svg></b><b><svg><use href="#zin"/></svg></b><b><svg><use href="#zout"/></svg></b><b><svg><use href="#zfull"/></svg></b><b><svg><use href="#zsel"/></svg></b><b><svg><use href="#zlay"/></svg></b><b class="off"><svg><use href="#glass"/></svg><span class="tx tx-11">1:1</span></b><b><svg><use href="#zprev"/></svg></b><b class="off"><svg><use href="#znext"/></svg></b><b><svg><use href="#newmap"/></svg></b><b><svg><use href="#newbm"/></svg></b><b><svg><use href="#bm"/></svg></b><b><svg><use href="#refresh"/></svg></b><i class="h"></i><b><svg><use href="#info"/></svg><span class="tx tx-i">i</span></b><b class="off"><svg><use href="#action"/></svg></b><i class="dd off2"></i><b><svg><use href="#select"/></svg></b><i class="dd"></i><b><svg><use href="#form"/></svg></b><i class="dd"></i><b><svg><use href="#desel"/></svg></b><b><svg><use href="#table"/></svg></b><b><svg><use href="#abacus"/></svg></b><b><svg><use href="#cog"/></svg></b><b><svg><use href="#sigma"/></svg></b><b><svg><use href="#ruler"/></svg></b><i class="dd"></i><b><svg><use href="#tip"/></svg></b><b><svg><use href="#textn"/></svg><span class="tx tx-t">T</span></b><i class="dd"></i>
</div>
<div class="bar">
<i class="h first"></i><b><svg><use href="#dsm"/></svg></b><b><svg><use href="#gpkg"/></svg></b><b><svg><use href="#shp"/></svg></b><b><svg><use href="#feather"/></svg></b><b><svg><use href="#chip"/></svg></b><i class="s"></i><b><svg><use href="#virt"/></svg></b><i class="h"></i><b class="off mini"><svg><use href="#pencils"/></svg></b><b><svg><use href="#pencil"/></svg></b><b class="off"><svg><use href="#saveed"/></svg></b><b class="off"><svg><use href="#pts"/></svg></b><b class="off"><svg><use href="#vtool"/></svg></b><i class="dd off2"></i><b class="off"><svg><use href="#multi"/></svg></b><b class="off"><svg><use href="#trash"/></svg></b><b class="off"><svg><use href="#cut"/></svg></b><b class="off"><svg><use href="#copy"/></svg></b><b class="off"><svg><use href="#paste"/></svg></b><b class="off"><svg><use href="#undo"/></svg></b><b class="off"><svg><use href="#redo"/></svg></b><i class="h"></i><b><svg><use href="#lab"/></svg><span class="tx abc">abc</span></b><b><svg><use href="#diag"/></svg></b><i class="s"></i><b><svg><use href="#labpin"/></svg><span class="tx abc">ab</span></b><b><svg><use href="#labr"/></svg><span class="tx abc red">abc</span></b><i class="s"></i><b class="off"><svg><use href="#labpg"/></svg><span class="tx abc">ab</span></b><b class="off"><svg><use href="#labeye"/></svg><span class="tx abc">abc</span></b><b class="off"><svg><use href="#labmv"/></svg><span class="tx abc">abc</span></b><b class="off"><svg><use href="#labrot"/></svg><span class="tx abc">abc</span></b><b class="off"><svg><use href="#labed"/></svg><span class="tx abc">abc</span></b><i class="h"></i><b><svg><use href="#db"/></svg></b><i class="h"></i><b><svg><use href="#tri"/></svg></b><b><svg><use href="#osm"/></svg></b><i class="h"></i><b><svg><use href="#py"/></svg></b><b><svg><use href="#robot"/></svg></b><i class="h"></i><b><svg><use href="#help"/></svg><span class="tx tx-q">?</span></b><i class="h"></i>
</div>
<div class="bar bar3">
<i class="h first"></i><b class="off"><svg><use href="#arc"/></svg></b><i class="dd off2"></i><b class="off"><svg><use href="#circ"/></svg></b><i class="dd off2"></i><b class="off"><svg><use href="#ell"/></svg></b><i class="dd off2"></i><b class="off"><svg><use href="#rect"/></svg></b><i class="dd off2"></i><b class="off"><svg><use href="#poly"/></svg></b><i class="dd off2"></i><i class="h"></i><b><svg><use href="#plane"/></svg></b><i class="h"></i><b><span class="k ad">AD</span></b><b><span class="k mo">MO</span></b><b><span class="k ro">RO</span></b><div class="spin num"><span>0,000</span><i class="ud"></i></div><b><span class="k sc">SC</span></b><b><span class="k adj">ADJ</span></b><b><span class="k tp">2P</span></b><b><span class="k tm">T-</span></b><b><span class="k tpl">T+</span></b><b><span class="k ex">!!</span></b><b><svg><use href="#back"/></svg></b><i class="h"></i><b><svg><use href="#pineg"/></svg></b><b><svg><use href="#pine"/></svg></b><i class="h"></i><b><svg><use href="#penw"/></svg></b><b><svg><use href="#penl"/></svg></b><b class="mini"><svg><use href="#blob"/></svg></b><b><svg><use href="#eraser"/></svg></b><b><svg><use href="#cross"/></svg></b><b><svg><use href="#note"/></svg></b><b><svg><use href="#card"/></svg></b><b><svg><use href="#down"/></svg></b><b><svg><use href="#up"/></svg></b>
</div>

<main class="work">
<section class="layers">
<div class="dock"><span>Warstwy</span><svg><use href="#dock1"/></svg><svg><use href="#dock2"/></svg></div>
<div class="ltools"><svg><use href="#brush"/></svg><svg><use href="#grp"/></svg><svg><use href="#eye"/></svg><svg><use href="#funnel"/></svg><svg><use href="#eps"/></svg><i class="dd"></i><svg><use href="#exp"/></svg><svg><use href="#col"/></svg><svg><use href="#rem"/></svg></div>
<div class="tree">
<div class="row"><i class="cb"></i><i class="sw" style="background:#8b5699"></i><span>tundra</span><em><svg><use href="#q"/></svg></em></div>
<div class="row"><i class="cb"></i><i class="sw" style="background:#e5b636"></i><span>Naprawione geometrie</span></div>
<div class="row"><i class="cb"></i><i class="sw" style="background:#becf50"></i><span class="wide">veg_id_24.0 veg_id_24 [125]</span></div>
<div class="row"><i class="cb"></i><i class="sw" style="background:#e77148"></i><span class="wide">veg_id_25.0 veg_id_25 [155]</span></div>
<div class="row"><i class="cb"></i><i class="sw" style="background:#ff9200"></i><span class="wide">veg_id_50.0 veg_id_50</span><em><svg><use href="#warn"/></svg></em></div>
<div class="row"><i class="cb"></i><i class="ln" style="background:#ffa62e"></i><span>trails</span><em><svg><use href="#q"/></svg></em></div>
<div class="row"><i class="cb"></i><i class="pt" style="background:#85569a"></i><span>popp</span></div>
<div class="row"><i class="cb"></i><i class="sw" style="background:#b7484b"></i><span>swamp</span><em><svg><use href="#q"/></svg></em></div>
<div class="row"><i class="cb"></i><i class="pt" style="background:#e77148"></i><span>storagep</span><em><svg><use href="#q"/></svg></em></div>
<div class="row"><i class="cb"></i><i class="ln" style="background:#f4a9b8"></i><span>Iloczyn</span><em><svg><use href="#mem"/></svg></em></div>
<div class="row"><i class="cb"></i><i class="ln" style="background:#becf50"></i><span>railroads</span></div>
<div class="row"><i class="cb"></i><i class="pt" style="background:#ff9e17"></i><span>buildings_bristol_bay [5]</span></div>
<div class="row act sel"><i class="cb ck"></i><i class="pt" style="background:#a5706a"></i><span>buildings_bristol_bay_100km_river [5]</span></div>
<div class="row act"><i class="cb ck"></i><i class="sw" style="background:#987db7"></i><span>regions</span></div>
<div class="row"><i class="cb"></i><i class="ln" style="background:#a596be"></i><span>rivers</span><em><svg><use href="#q"/></svg></em></div>
<div class="row"><i class="cb"></i><i class="ln" style="background:#cf5457"></i><span>pipelines</span><em><svg><use href="#q"/></svg></em></div>
<div class="row"><i class="cb"></i><i class="ln" style="background:#c0b4a4"></i><span>majrivers</span><em><svg><use href="#q"/></svg></em></div>
<div class="row"><i class="cb"></i><i class="sw" style="background:#91522d"></i><span>landice</span><em><svg><use href="#q"/></svg></em></div>
<div class="row"><i class="cb"></i><i class="sw" style="background:#7d8b8f"></i><span>lakes</span><em><svg><use href="#q"/></svg></em></div>
<div class="row"><i class="cb"></i><i class="sw" style="background:#85b66f"></i><span>grassland</span><em><svg><use href="#q"/></svg></em></div>
<div class="row"><i class="cb"></i><i class="sw" style="background:#a47158"></i><span>builtups</span><em><svg><use href="#q"/></svg></em></div>
<div class="row"><i class="cb"></i><i class="sw" style="background:#d5b43c"></i><span>alaska</span><em><svg><use href="#q"/></svg></em></div>
<div class="row"><i class="cb"></i><i class="pt" style="background:#91522d"></i><span>airports</span><em><svg><use href="#q"/></svg></em></div>
<div class="row grp"><i class="cb"></i><svg class="gi" viewBox="0 0 16 16"><path d="M.8 4c2-3 4 0 7 0s6-3 7.500-1-.5 4 0 7-3 3-5 1.500-4-.5-7 .5C-1 12 2 8 .8 4z" fill="#ddd" stroke="#888"/></svg><span>trees</span><em><svg><use href="#q"/></svg></em></div>
</div>
</section>
<div class="split"><i></i></div>
<section class="map">
<svg viewBox="376 172 1086 827" width="1086" height="827"><g transform="translate(370 170) scale(.333333)" stroke="#232323" stroke-width="3" stroke-linejoin="round">
<path d="M1097 643L1210 646 1300 652 1460 656V1728L610 1688 508 1685 600 1300 1000 700z" fill="#ff0"/>
<path d="M10 1020L38 1005 209 958 247 910 294 882 338 872 388 840 418 815 437 805 478 807 496 815 655 788 715 763 720 740 742 719 798 713 838 697 898 665 956 615 959 582 973 557 1010 534 1025 510 1022 480 1028 460V390L1032 366 1056 339 1077 305 1120 273 1205 233 1273 214 1333 271 1309 300 1230 312 1198 325 1174 350 1162 376 1128 505 1138 520 1153 531 1166 548 1161 580 1148 597 1141 583 1127 588 1114 612 1120 627 1088 646 1055 686V725L1066 736V793L1085 832 1077 886 1053 913 1040 962 1010 1020 995 1042 973 1043 945 1073 935 1092 940 1160 922 1230 928 1255 943 1280 982 1294 1037 1276 1088 1274 1106 1297 1097 1297 1086 1307 1042 1312 1013 1329 988 1336 933 1332 872 1350 833 1395 800 1414 761 1456 738 1465 705 1492 682 1516 660 1554 616 1597 564 1625 533 1667 511 1682 502 1698 485 1711 466 1737 435 1803 390 1868 373 1908 276 2018 235 2049 221 2049 204 2038 167 2049 108 2130 75 2162 54 2174 88 2117 75 2120 43 2156 10 2240z" fill="#fff"/>
<path d="M722 0L685 765 640 782 610 791 525 803 437 804" fill="none" stroke-width="4"/>
<g fill="#e77148" stroke-width="3.500"><circle cx="960" cy="1103" r="11"/><circle cx="960" cy="1143" r="11"/><circle cx="1107" cy="1218" r="11"/><circle cx="942" cy="1347" r="11"/><circle cx="885" cy="1377" r="11"/></g>
</g></svg>
</section>
<section class="right">
<div class="dock"><span>Podgląd wyników</span><svg><use href="#dock1"/></svg><svg><use href="#dock2"/></svg></div>
<div class="box b1"></div><div class="box b2"></div>
</section>
</main>

<footer class="status">
<div class="find"><svg viewBox="0 0 14 14"><circle cx="6" cy="5.500" r="4" fill="none" stroke="#888" stroke-width="1.300"/><path d="M9 8.500l4 4" stroke="#888" stroke-width="1.500"/></svg><span>Szukana fraza (Ctrl+K)</span></div>
<span class="msg">Włącza/wyłącza tryb edycji aktywnej warstwy</span>
<span class="w" style="width:78px">Współrzędne</span><div class="inp coord"><span>-575803,3238971</span></div>
<svg class="st" viewBox="0 0 16 16" style="margin:0 12px 0 4px"><path d="M2 1l8 13M5 0l7 12M1 5l9-3M2 9l9-3" stroke="#444" stroke-width="1.500"/><path d="M7 7c4-2 7 0 6 4s-4 4-6 2z" fill="#ddd" stroke="#444"/></svg>
<span class="w" style="width:35px">Skala</span><div class="inp combo" style="width:98px"><span>0:1</span><i class="dd"></i></div>
<svg class="st" viewBox="0 0 16 16" style="margin:0 7px 0 11px"><path d="M4.500 8V4.500c0-4 7-4 7 0V8" fill="none" stroke="#777" stroke-width="1.600"/><rect x="2.500" y="7" width="11" height="8" rx="1" fill="#555"/></svg>
<span class="w" style="width:79px">Powiększenie</span><div class="spin" style="width:88px"><span>100%</span><i class="ud"></i></div>
<span class="w" style="width:50px;padding-left:9px">Obrót</span><div class="spin" style="width:84px"><span>0,0 °</span><i class="ud"></i></div>
<i class="cb ck" style="margin:0 5px 0 6px"></i><span class="w" style="width:68px">Renderuj</span>
<svg class="st" viewBox="0 0 16 16"><path d="M2 2l12 12M14 2L2 14M2 8h12" stroke="#ccc" stroke-width="4"/><path d="M2 2l12 12M14 2L2 14" stroke="#555" stroke-width="2"/></svg>
<svg class="st" viewBox="0 0 16 16" style="margin-left:25px"><path d="M1 7c0-7 14-7 14 0 0 4-2 5-4 5l1 4-5-4c-4 0-6-1-6-5z" fill="#555"/><path d="M4 7h2M7 7h2M10 7h2" stroke="#fff" stroke-width="2"/></svg>
</footer>
</div>

<div class="dlg">
<div class="dt"><svg class="logo"><use href="#qgis"/></svg><span>buildings_bristol_bay_100km_river :: Liczba obiektów: 5, odfiltrowanych: 5, zaznaczonych: 0</span><svg class="winbtn" viewBox="0 0 140 14"><path d="M2 6.500h12" stroke="#000"/><path d="M60.500 1.500h11v11h-11z" fill="none" stroke="#000" stroke-width="1.200"/><path d="M119 1l12 12M131 1l-12 12" stroke="#000" stroke-width="1.100"/></svg></div>
<div class="dtool"><b><svg><use href="#pencil"/></svg></b><b class="off"><svg><use href="#multi"/></svg></b><b class="off"><svg><use href="#saveed"/></svg></b><b><svg><use href="#refresh"/></svg></b><i class="s"></i><b class="off"><svg><use href="#newmap"/></svg></b><b class="off"><svg><use href="#copy"/></svg></b><b class="off"><svg><use href="#paste"/></svg></b><i class="s"></i><b><svg><use href="#fsel"/></svg></b><b><svg><use href="#all"/></svg></b><b><svg><use href="#inv"/></svg></b><b><svg><use href="#desel"/></svg></b><b><svg><use href="#funnel"/></svg></b><b><svg><use href="#top"/></svg></b><b><svg><use href="#pansel"/></svg></b><b><svg><use href="#zsel"/></svg></b><i class="s"></i><b class="off"><svg><use href="#newmap"/></svg></b><b class="off"><svg><use href="#cols"/></svg></b><b><svg><use href="#abacus"/></svg></b><i class="s"></i><b><svg><use href="#cond"/></svg></b><i class="s"></i><b><svg><use href="#dockt"/></svg></b><b><svg><use href="#act"/></svg></b></div>
<div class="grid">
<div class="c hd"></div><div class="c hd">st_distance</div><div class="c hd">building_gid</div><div class="c hd">river_gid</div><div class="fill"></div>
<div class="c n">1</div><div class="c f">67529,1709...</div><div class="c">1510</div><div class="c">4108</div><div></div>
<div class="c n">2</div><div class="c f alt">72540,2926...</div><div class="c alt">1511</div><div class="c alt">4108</div><div></div>
<div class="c n">3</div><div class="c f">72258,1994...</div><div class="c">1501</div><div class="c">4108</div><div></div>
<div class="c n">4</div><div class="c f alt">71051,0289...</div><div class="c alt">1503</div><div class="c alt">4108</div><div></div>
<div class="c n">5</div><div class="c f cur">55848,2459...</div><div class="c">1505</div><div class="c">4108</div><div></div>
<div class="fill"></div>
</div>
<div class="dfoot"><div class="fbtn"><svg><use href="#funnel"/></svg><span>Pokaż wszystkie obiekty</span><i></i></div><svg class="v1"><use href="#fview"/></svg><span class="von"><svg><use href="#table"/></svg></span></div>
</div>
</body>
</html>
```
FILE: styles.css
```css
* { box-sizing: border-box; }
body {
  margin: 0;
  width: 1920px;
  height: 1027px;
  overflow: hidden;
  background: #efefef;
  color: #000;
  font: 14px/20px "Open Sans", "Noto Sans", sans-serif;
  letter-spacing: -0.45px;
  white-space: nowrap;
}
i, em { font-style: normal; flex: none; }
svg { flex: none; display: block; overflow: visible; }
.defs { position: absolute; }
.app { display: flex; flex-direction: column; height: 1027px; }

.title { height: 29px; background: #fff; color: #888; display: flex; align-items: center; padding-left: 2px; flex: none; }
.logo { width: 20px; height: 20px; }
.t-app { margin: 0 0 0 5px; font-size: 15px; letter-spacing: -.3px; }
.winbtn { width: 140px; height: 14px; }
.title .winbtn { margin-left: auto; margin-right: 16px; }
.menu { height: 25px; flex: none; border-bottom: 1px solid #d6d6d6; display: flex; padding: 3px 0 0 10px; color: #999; font-size: 14.500px; letter-spacing: -.33px; }
.menu span { flex: none; }
.menu u { text-underline-offset: 2px; }

.bar { height: 39px; flex: none; display: flex; align-items: center; background: linear-gradient(#fafafa, #efefef); border-bottom: 1px solid #b4b4b4; }
.bar3 { height: 38px; }
.bar > b { width: 33px; height: 33px; display: flex; align-items: center; justify-content: center; flex: none; position: relative; }
.bar svg { width: 23px; height: 23px; }
.off svg { opacity: .38; filter: saturate(.35); }
.off .tx { opacity: .38; }
.bar > .on { width: 32px; height: 31px; background: #dcdcdc; border: 1px solid #aaa; border-radius: 3px; margin-right: 1px; }
.tx { position: absolute; font: 700 9px/10px "Noto Sans", sans-serif; letter-spacing: -.4px; color: #333; }
.abc { left: 10px; top: 9px; }
.red { color: #d11; }
.tx-a { left: 18px; top: 15px; font-size: 11px; }
.tx-11 { left: 12px; top: 9px; font-size: 8px; letter-spacing: -.2px; }
.tx-i { left: 11px; top: 9px; font: italic 700 16px/12px "Liberation Serif", serif; color: #fff; }
.tx-t { left: 11px; top: 8px; font: 700 14px/12px "Liberation Serif", serif; }
.tx-q { left: 15px; top: 10px; font-size: 14px; line-height: 14px; color: #fff; }
.h { width: 16px; height: 17px; background: radial-gradient(circle, #bbb 0 .8px, transparent 1px) 8px 0 / 4px 4px repeat; background-clip: content-box; padding: 0 0 0 8px; }
.h.first { width: 13px; padding: 0 3px 0 5px; background-position: 5px 0; }
.h:last-child { width: 17px; }
.s { width: 6px; height: 19px; border-left: 1px solid #d4d4d4; }
.dd { width: 12px; height: 5px; }
.dd::after { content: ""; display: block; border: 4px solid transparent; border-top: 4px solid #555; border-bottom: 0; width: 0; }
.off2::after { border-top-color: #999; }
.mini::after { content: ""; position: absolute; right: 1px; bottom: 4px; border: 3px solid transparent; border-top-color: #777; border-bottom: 0; }
.k { width: 24px; height: 24px; font: 700 12px/24px "DejaVu Sans Mono", monospace; text-align: center; letter-spacing: -0.2px; }
.ad { background: #ffb9c4; color: #f22; }
.mo { background: #dfe7df; color: #cdd3cd; }
.ro { background: #bdb5c0; color: #d8cfd8; }
.sc { background: #d5d8c5; color: #b9bcab; }
.adj { background: #c6bcbd; color: #eee; }
.tp { background: #d5dcdb; color: #cfc8cc; }
.tm { background: #f6f6f6; color: #a4a4a4; }
.tpl { background: #a5a5a5; color: #eee; }
.ex { background: #d8dfd1; color: #c4cbbd; }

.spin, .inp { background: #fff; border: 1px solid #aaa; border-radius: 3px; display: flex; align-items: center; height: 23px; padding-left: 4px; flex: none; }
.spin span, .inp span { flex: 1; }
.ud { width: 14px; height: 21px; border-left: 1px solid #bbb; background: #f6f6f6; display: flex; flex-direction: column; align-items: center; justify-content: center; gap: 4px; }
.ud::before, .ud::after { content: ""; border: 3px solid transparent; }
.ud::before { border-bottom: 4px solid #777; border-top: 0; }
.ud::after { border-top: 4px solid #777; border-bottom: 0; }
.num { width: 85px; margin-right: 1px; color: #777; background: #f4f4f4; font-size: 15px; letter-spacing: -.3px; }

.work { flex: 1; display: flex; min-height: 0; padding-top: 1px; }
.layers { width: 369px; display: flex; flex-direction: column; height: 828px; }
.dock { height: 20px; display: flex; align-items: center; padding: 2px 2px 0 4px; gap: 3px; font-size: 14.500px; letter-spacing: -.1px; flex: none; }
.dock span { flex: 1; }
.dock svg { width: 11px; height: 11px; margin-top: -3px; }
.ltools { height: 30px; flex: none; display: flex; align-items: center; gap: 9px; padding: 0 0 2px 8px; }
.ltools svg { width: 16px; height: 16px; }
.ltools .dd { width: 8px; margin: 0 -2px 0 -3px; }
.tree { flex: 1; background: #fff; border: 1px solid #b4b4b4; }
.row { height: 22px; display: flex; align-items: center; padding: 0 1px 0 23px; font: italic 700 15px/22px "Open Sans", sans-serif; letter-spacing: .1px; color: #7d7d7d; position: relative; }
.row > span { flex: 1; padding-top: 1px; }
.row > .wide { letter-spacing: .35px; }
.row::after { content: ""; width: 3px; height: 18px; background: #dedede; margin: 0 0 0 2px; }
.cb { width: 14px; height: 14px; border: 1px solid #bbb; border-radius: 1px; background: #fff; position: relative; }
.row .cb { margin-right: 6px; }
.ck::after { content: ""; position: absolute; left: 3px; top: 0; width: 5px; height: 9px; border: solid #000; border-width: 0 2px 2px 0; transform: rotate(36deg); }
.sw { width: 16px; height: 16px; box-shadow: inset 0 0 0 1px rgba(0,0,0,.4); margin-right: 6px; }
.ln { width: 16px; height: 1px; margin-right: 6px; }
.pt { width: 7px; height: 7px; border-radius: 50%; box-shadow: 0 0 0 .5px #444; margin: 0 11px 0 4px; }
.gi { width: 16px; height: 16px; margin-right: 6px; }
.row em { width: 19px; height: 19px; border: 1px solid #e4e4e4; border-radius: 3px; background: #f6f6f6; }
.row em svg { width: 17px; height: 17px; }
.row.act { color: #000; font-style: normal; font-size: 14px; letter-spacing: .15px; }
.sel { background: #efefef; }
.sel span { text-decoration: underline; text-decoration-thickness: 1px; text-underline-offset: 2px; }
.grp::before { content: ""; position: absolute; left: 8px; border: 4px solid transparent; border-left-color: #555; border-right: 0; }
.split { width: 6px; display: flex; align-items: center; }
.split i { width: 3px; height: 18px; margin-left: 2px; background: radial-gradient(circle, #bbb 0 .8px, transparent 1px) 0 0 / 3px 4px; }
.map { width: 1088px; height: 828px; border: 1px solid #b4b4b4; background: #987db7; overflow: hidden; }
.right { flex: 1; margin-left: 6px; display: flex; flex-direction: column; height: 828px; }
.box { background: #fff; border: 1px solid #b4b4b4; }
.b1 { height: 403px; margin-bottom: 3px; flex: none; }
.b2 { flex: 1; }
.right .dock { height: 19px; padding-top: 3px; }
.right .dock svg { margin-top: -4px; }

.status { height: 28px; flex: none; display: flex; align-items: center; padding: 5px 0 0 4px; font-size: 12.500px; letter-spacing: -.12px; }
.status .find { width: 200px; height: 26px; background: #fff; border: 1px solid #aaa; border-radius: 3px; display: flex; align-items: center; color: #888; padding-left: 8px; gap: 6px; margin-right: 8px; font-size: 13.500px; letter-spacing: 0; }
.find svg { width: 14px; height: 14px; }
.msg { width: 857px; flex: none; padding-top: 1px; letter-spacing: .06px; }
.coord { width: 116px; letter-spacing: -.2px; }
.w { flex: none; }
.st { width: 16px; height: 16px; }
.status .inp { height: 25px; padding-left: 6px; }
.status .inp.combo { padding-left: 4px; }
.combo .dd { width: 20px; height: 23px; border-left: 1px solid #bbb; padding: 9px 0 0 5px; }
.combo .dd::after { border-top-color: #777; }

.dlg { position: absolute; left: 834px; top: 273px; width: 1052px; height: 531px; border: 1px solid #555; background: #efefef; box-shadow: 0 4px 20px rgba(0,0,0,.38); display: flex; flex-direction: column; }
.dt { height: 37px; background: #fff; display: flex; align-items: center; padding-left: 9px; flex: none; letter-spacing: .06px; }
.dt .logo { margin-right: 9px; }
.dt .winbtn { margin: 0 15px 0 auto; }
.dtool { height: 32px; flex: none; display: flex; align-items: center; border-bottom: 1px solid #b4b4b4; padding: 0 0 1px 3px; }
.dtool b { width: 25px; display: flex; justify-content: center; flex: none; }
.dtool svg { width: 16px; height: 16px; }
.dtool .s { width: 7px; height: 13px; border: 0; background: linear-gradient(#ccc, #ccc) 4px 0 / 1px 100% no-repeat; }
.grid { flex: 1; background: #fff; display: grid; grid-template-columns: 13px 100px 100px 100px 1fr; grid-template-rows: 24px repeat(5, 30px) 1fr; font-size: 14px; border-left: 1px solid #ccc; }
.c { border-right: 1px solid #c6c6c6; border-bottom: 1px solid #c6c6c6; text-align: right; padding-right: 3px; line-height: 29px; }
.f { letter-spacing: 0; padding-right: 2px; }
.hd { text-align: center; line-height: 25px; background: linear-gradient(#fff, #eee); border-bottom-color: #b4b4b4; padding: 0; letter-spacing: .05px; }
.n { background: linear-gradient(#fff, #eee); text-align: center; padding: 0; border-color: #b4b4b4; line-height: 31px; }
.fill { background: #efefef; }
.alt { background: #e8e6e3; }
.cur { box-shadow: inset 0 0 0 1px #00f583; background: linear-gradient(#fff, #e6f1fd); border: 1px solid #00f583; color: #223; padding-right: 2px; line-height: 28px; }
.dfoot { height: 28px; flex: none; border-top: 1px solid #b4b4b4; display: flex; align-items: center; padding: 0 3px 4px; }
.fbtn { width: 182px; height: 23px; border: 1px solid #b0b0b0; border-radius: 3px; background: linear-gradient(#fff, #f2f2f2); display: flex; align-items: center; padding-left: 4px; gap: 5px; font-size: 13.500px; letter-spacing: -.18px; }
.fbtn svg { width: 15px; height: 15px; }
.fbtn i { margin-top: 12px; margin-left: -3px; border: 3px solid transparent; border-top-color: #555; border-bottom: 0; }
.v1 { width: 15px; height: 15px; margin: 0 5px 0 auto; }
.von { width: 24px; height: 23px; background: #dcdcdc; border: 1px solid #aaa; border-radius: 3px; display: flex; align-items: center; justify-content: center; }
.von svg { width: 15px; height: 15px; }
```
